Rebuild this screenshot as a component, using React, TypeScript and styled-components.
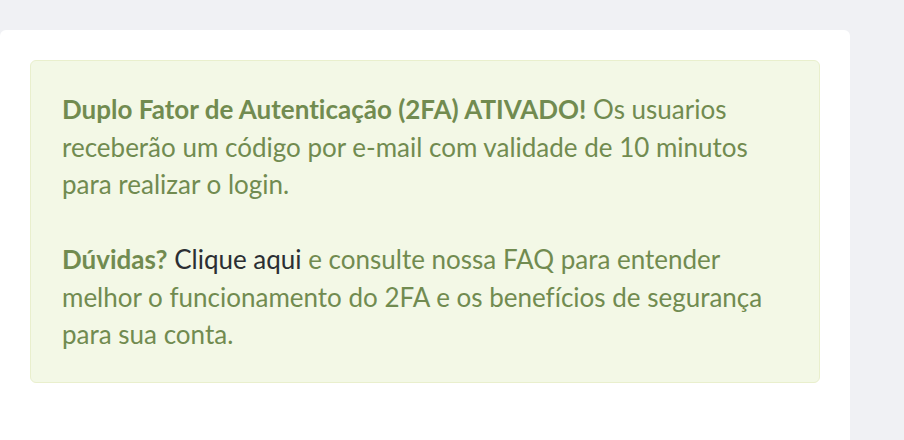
import React from 'react'
import styled, { createGlobalStyle } from 'styled-components'

const GlobalStyle = createGlobalStyle`
  html, body {
    margin: 0;
    padding: 0;
    background: #f0f1f4;
    font-family: Lato, 'Noto Sans', sans-serif;
  }
`

const Page = styled.div`
  padding-top: 30px;
  height: 440px;
  box-sizing: border-box;
  overflow: hidden;
`

const Card = styled.div`
  width: 850px;
  height: 100%;
  background: #ffffff;
  border-radius: 6px 6px 0 0;
  padding: 30px 30px;
  box-sizing: border-box;
`

const Alert = styled.div`
  width: 790px;
  box-sizing: border-box;
  background: #f3f8e6;
  border: 1px solid #e9efcd;
  border-radius: 6px;
  padding: 30px 48px 28px 31px;
  color: #718b50;
  font-size: 26px;
  line-height: 37.5px;
  font-variant-ligatures: none;
`

const Paragraph = styled.p`
  margin: 0;

  & + & {
    margin-top: 37.5px;
  }
`

const Strong = styled.strong`
  font-weight: 700;
`

const Link = styled.a`
  color: #2b2f33;
  text-decoration: none;
  cursor: pointer;
`

export default function App() {
  return (
    <>
      <GlobalStyle />
      <Page>
        <Card>
          <Alert>
            <Paragraph>
              <Strong>Duplo Fator de Autenticação (2FA) ATIVADO!</Strong> Os usuarios receberão um código por
              e-mail com validade de 10 minutos para realizar o login.
            </Paragraph>
            <Paragraph>
              <Strong>Dúvidas?</Strong> <Link>Clique aqui</Link> e consulte nossa FAQ para entender melhor o
              funcionamento do 2FA e os benefícios de segurança para sua conta.
            </Paragraph>
          </Alert>
        </Card>
      </Page>
    </>
  )
}
